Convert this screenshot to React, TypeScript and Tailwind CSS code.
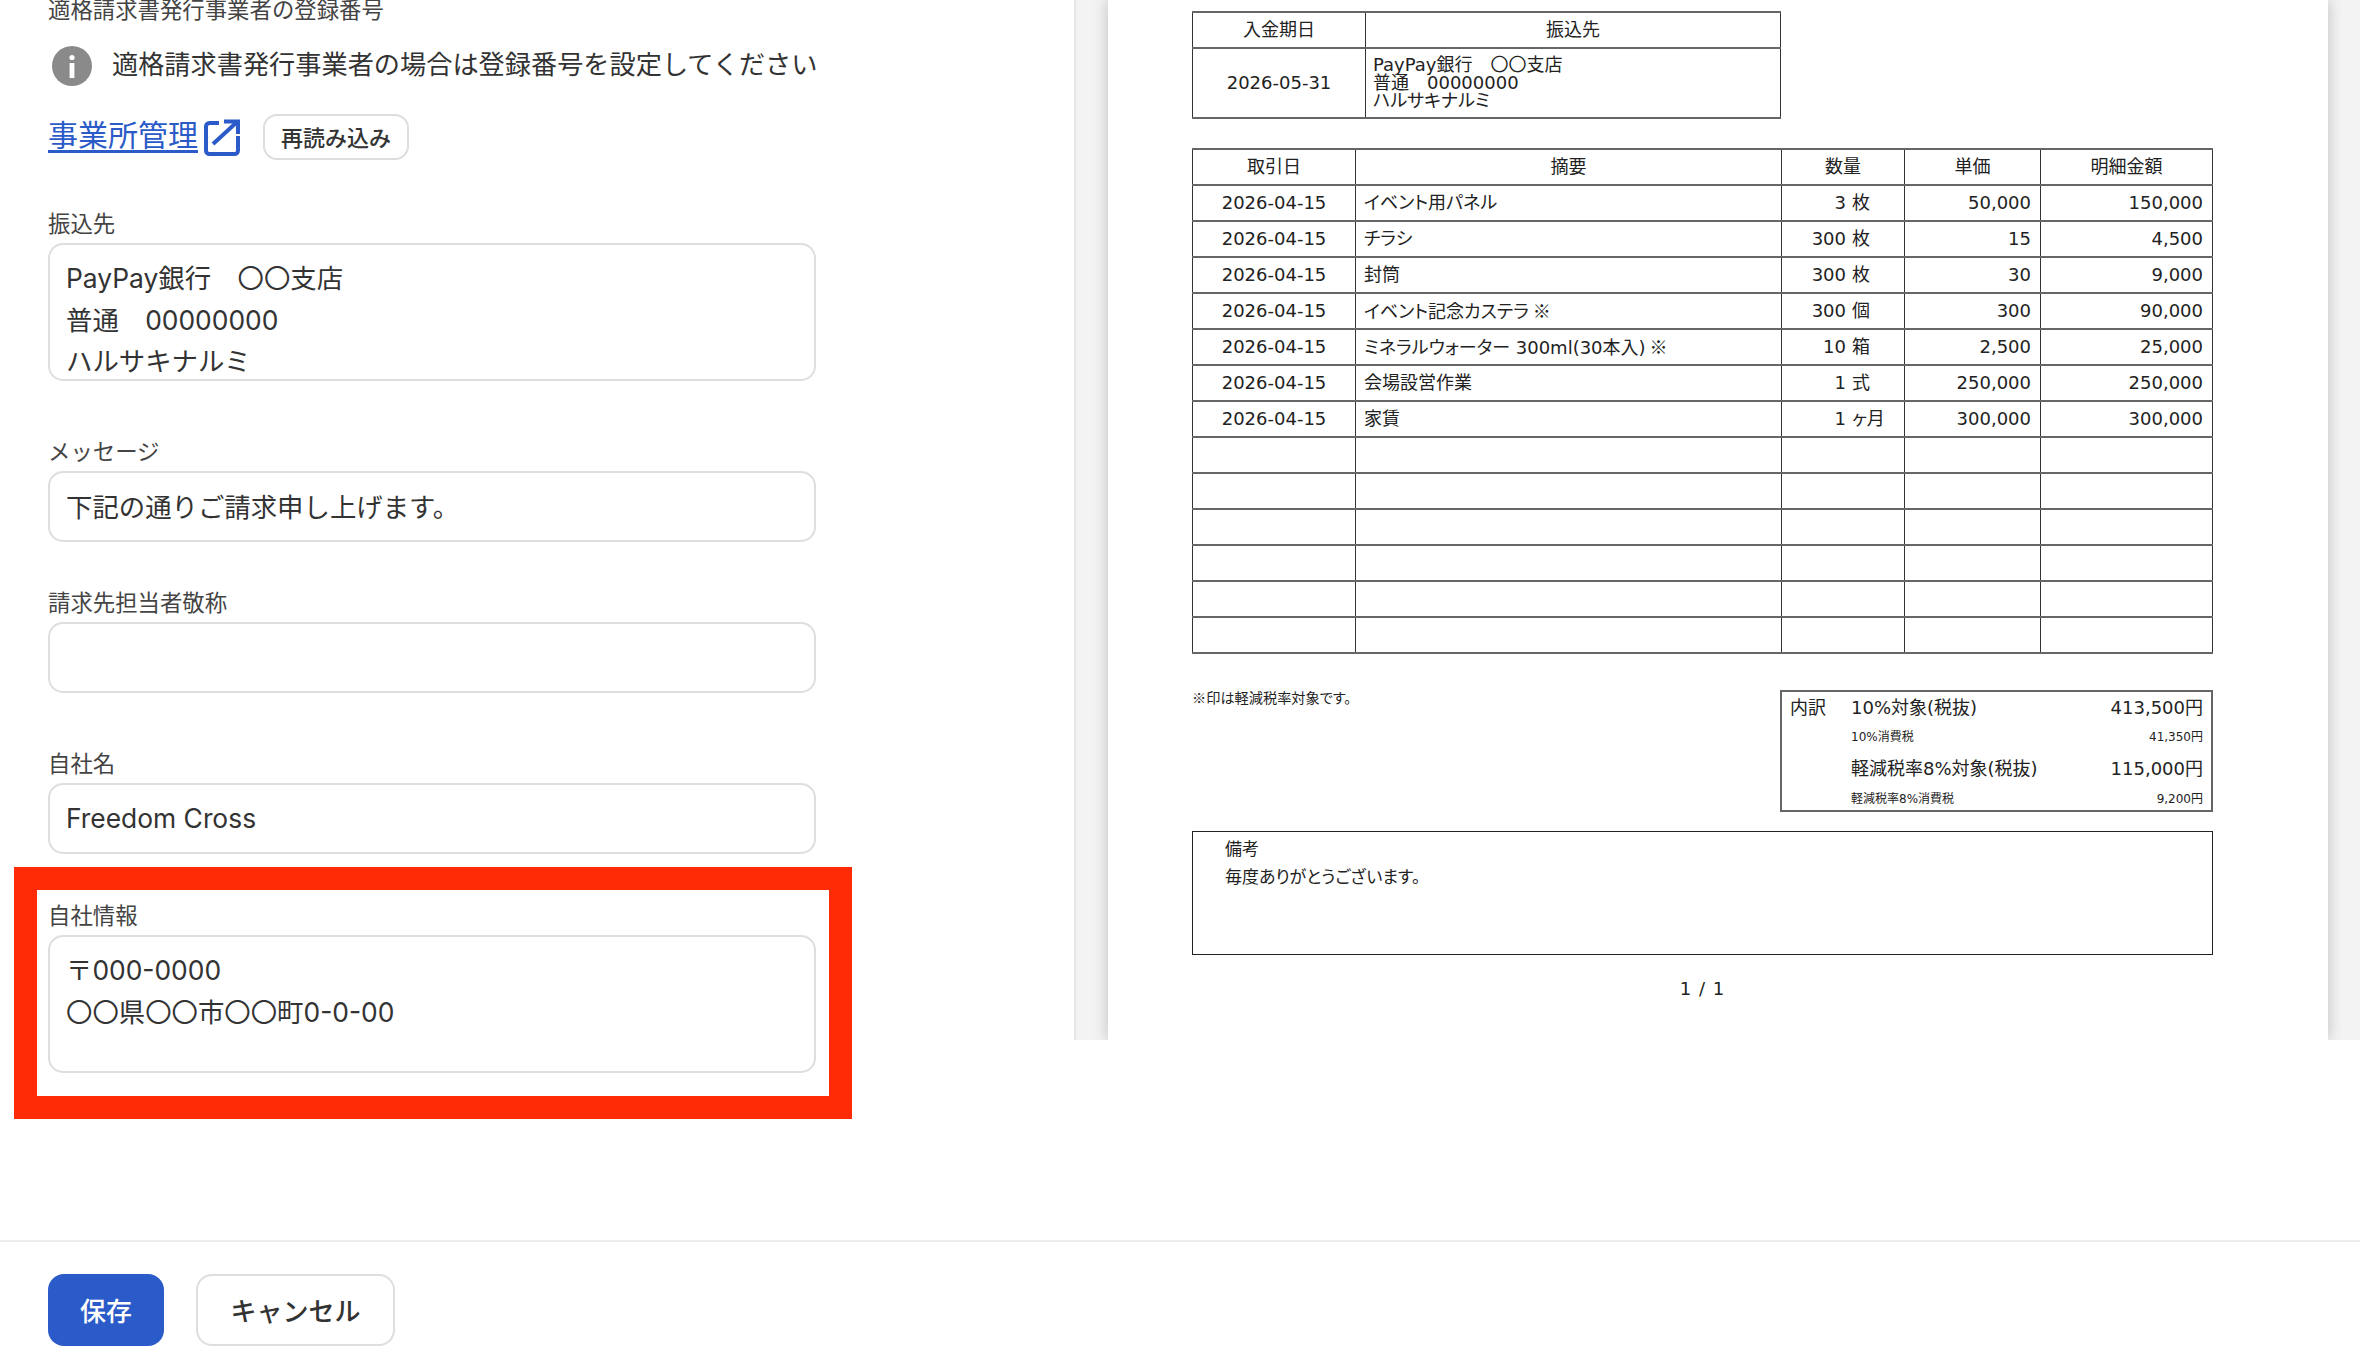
const rows = [
  { date: '2026-04-15', desc: 'イベント用パネル', qty: '3', unit: '枚', price: '50,000', amount: '150,000' },
  { date: '2026-04-15', desc: 'チラシ', qty: '300', unit: '枚', price: '15', amount: '4,500' },
  { date: '2026-04-15', desc: '封筒', qty: '300', unit: '枚', price: '30', amount: '9,000' },
  { date: '2026-04-15', desc: 'イベント記念カステラ', mark: true, qty: '300', unit: '個', price: '300', amount: '90,000' },
  { date: '2026-04-15', desc: 'ミネラルウォーター 300ml(30本入)', mark: true, qty: '10', unit: '箱', price: '2,500', amount: '25,000' },
  { date: '2026-04-15', desc: '会場設営作業', qty: '1', unit: '式', price: '250,000', amount: '250,000' },
  { date: '2026-04-15', desc: '家賃', qty: '1', unit: 'ヶ月', price: '300,000', amount: '300,000' },
  ...Array.from({ length: 6 }, () => ({ date: '', desc: '', qty: '', unit: '', price: '', amount: '' })),
];

const cell = 'border-x border-x-[#333] border-y-2 border-y-[#666] p-0 h-[36px] text-[18px] leading-none font-normal text-[#222]';
const inputBox = "block w-[768px] rounded-[15px] border-2 border-[#dedede] bg-white px-[16px] font-['Inter','Noto_Sans_CJK_JP',sans-serif] text-[26.4px] text-[#333] outline-none resize-none overflow-hidden";

function Field({ label, className, children }: { label: string; className: string; children: React.ReactNode }) {
  return (
    <div className={className}>
      <div className="mb-[5px] h-[30px] text-[22.4px] leading-[28px] text-[#444]">{label}</div>
      {children}
    </div>
  );
}

function InfoIcon() {
  return (
    <svg width="40" height="40" viewBox="0 0 40 40" className="shrink-0">
      <circle cx="20" cy="20" r="20" fill="#8a8a8a" />
      <circle cx="20" cy="11.5" r="2.6" fill="#fff" />
      <rect x="17.6" y="17" width="4.8" height="15" fill="#fff" />
    </svg>
  );
}

function ExternalIcon() {
  return (
    <svg width="36" height="37" viewBox="0 0 36 37" fill="none" stroke="#2b5bc8" strokeWidth="4" className="ml-[6px] shrink-0">
      <path d="M15 4H5.5A3.5 3.5 0 0 0 2 7.5v24A3.5 3.5 0 0 0 5.5 35h25a3.5 3.5 0 0 0 3.5-3.5V17" />
      <path d="M9 25 33 3" />
      <path d="M20 2.5h14V15" />
    </svg>
  );
}

export default function App() {
  return (
    <div className="flex h-[1355px] w-[2360px] flex-col overflow-hidden bg-white font-['Noto_Sans_CJK_JP','Noto_Sans',sans-serif]">
      <div className="flex h-[1240px] items-start">
        <div className="w-[1074px] shrink-0 pl-[48px]">
          <div className="mt-[-7px] h-[30px] text-[22.4px] leading-[30px] text-[#444]">適格請求書発行事業者の登録番号</div>

          <div className="mt-[23px] ml-[4px] flex h-[40px] items-center gap-[20px]">
            <InfoIcon />
            <span className="pb-[4px] text-[26.2px] text-[#333]">適格請求書発行事業者の場合は登録番号を設定してください</span>
          </div>

          <div className="mt-[28px] flex h-[46px] items-center">
            <a className="pb-[8px] text-[30px] leading-none text-[#2b5bc8] underline underline-offset-4">事業所管理</a>
            <ExternalIcon />
            <button className="ml-[23px] h-[46px] w-[146px] rounded-[14px] border-2 border-[#dedede] bg-white pb-[2px] text-[22px] font-medium text-[#333]">
              再読み込み
            </button>
          </div>

          <Field label="振込先" className="mt-[48px]">
            <textarea
              readOnly
              className={`${inputBox} h-[138px] py-[13px] leading-[41.6px]`}
              defaultValue={'PayPay銀行　〇〇支店\n普通　00000000\nハルサキナルミ'}
            />
          </Field>

          <Field label="メッセージ" className="mt-[55px]">
            <input readOnly className={`${inputBox} h-[71px] pb-[2px]`} defaultValue="下記の通りご請求申し上げます。" />
          </Field>

          <Field label="請求先担当者敬称" className="mt-[45px]">
            <input readOnly className={`${inputBox} h-[71px]`} />
          </Field>

          <Field label="自社名" className="mt-[55px]">
            <input readOnly className={`${inputBox} h-[71px] pb-[2px]`} defaultValue="Freedom Cross" />
          </Field>

          <Field label="自社情報" className="relative mt-[46px]">
            <textarea
              readOnly
              className={`${inputBox} h-[138px] py-[13px] leading-[41.6px]`}
              defaultValue={'〒000-0000\n〇〇県〇〇市〇〇町0-0-00'}
            />
            <div className="pointer-events-none absolute left-[-34px] top-[-33px] h-[252px] w-[838px] border-[23px] border-[#ff2a06]" />
          </Field>
        </div>

        <div className="h-[1040px] flex-1 overflow-hidden border-l-2 border-[#e6e6e6] bg-[#f4f3f4] pl-[32px]">
          <div className="h-[1040px] w-[1220px] bg-white pl-[84px] pt-[11px] shadow-[0_0_14px_rgba(0,0,0,0.22)] font-['DejaVu_Sans','Noto_Sans_CJK_JP',sans-serif] [font-feature-settings:'palt']">
            <table className="w-[589px] table-fixed border-collapse">
              <colgroup>
                <col className="w-[173px]" />
                <col />
              </colgroup>
              <tbody>
                <tr>
                  <th className={cell}>入金期日</th>
                  <th className={cell}>振込先</th>
                </tr>
                <tr>
                  <td className={`${cell} !h-[70px] text-center`}>2026-05-31</td>
                  <td className={`${cell} !h-[70px] pl-[7px] !leading-[18px]`}>
                    PayPay銀行　〇〇支店
                    <br />
                    普通　00000000
                    <br />
                    ハルサキナルミ
                  </td>
                </tr>
              </tbody>
            </table>

            <table className="mt-[29px] w-[1021px] table-fixed border-collapse">
              <colgroup>
                <col className="w-[163px]" />
                <col className="w-[426px]" />
                <col className="w-[123px]" />
                <col className="w-[136px]" />
                <col />
              </colgroup>
              <thead>
                <tr>
                  <th className={cell}>取引日</th>
                  <th className={cell}>摘要</th>
                  <th className={cell}>数量</th>
                  <th className={cell}>単価</th>
                  <th className={cell}>明細金額</th>
                </tr>
              </thead>
              <tbody>
                {rows.map((r, i) => (
                  <tr key={i}>
                    <td className={`${cell} text-center`}>{r.date}</td>
                    <td className={`${cell} pl-[8px]`}>
                      {r.desc}
                      {r.mark && <span className="font-['Noto_Sans_CJK_JP',sans-serif]"> ※</span>}
                    </td>
                    <td className={cell}>
                      {r.qty && (
                        <div className="flex gap-[6px]">
                          <span className="w-[64px] text-right">{r.qty}</span>
                          <span>{r.unit}</span>
                        </div>
                      )}
                    </td>
                    <td className={`${cell} pr-[9px] text-right`}>{r.price}</td>
                    <td className={`${cell} pr-[9px] text-right`}>{r.amount}</td>
                  </tr>
                ))}
              </tbody>
            </table>

            <div className="mt-[36px] flex w-[1021px] justify-between">
              <div className="mt-[-2px] font-['Noto_Sans_CJK_JP',sans-serif] text-[14.2px] leading-[18px] text-[#222]">※印は軽減税率対象です。</div>
              <div className="h-[122px] w-[433px] border-2 border-[#666] px-[8px] text-[#222]">
                <div className="flex h-[30px] items-center text-[18px]">
                  <span className="w-[61px]">内訳</span>
                  <span className="flex-1">10%対象(税抜)</span>
                  <span>413,500円</span>
                </div>
                <div className="flex h-[30px] items-center pl-[61px] text-[12px]">
                  <span className="flex-1">10%消費税</span>
                  <span>41,350円</span>
                </div>
                <div className="mt-[1px] flex h-[30px] items-center pl-[61px] text-[18px]">
                  <span className="flex-1">軽減税率8%対象(税抜)</span>
                  <span>115,000円</span>
                </div>
                <div className="flex h-[27px] items-center pl-[61px] pt-[4px] text-[12px]">
                  <span className="flex-1">軽減税率8%消費税</span>
                  <span>9,200円</span>
                </div>
              </div>
            </div>

            <div className="mt-[19px] h-[124px] w-[1021px] border border-[#222] pl-[32px] pt-[3px] text-[17px] leading-[28px] text-[#222]">
              <div>備考</div>
              <div>毎度ありがとうございます。</div>
            </div>

            <div className="mt-[22px] w-[1021px] text-center text-[18px] leading-[24px] tracking-[1px] text-[#222]">1 / 1</div>
          </div>
        </div>
      </div>

      <div className="flex h-[115px] gap-[32px] border-t-2 border-[#ececec] pl-[48px] pt-[32px]">
        <button className="h-[72px] w-[116px] rounded-[16px] bg-[#2b5bc8] pb-[2px] text-[26px] font-medium text-white">保存</button>
        <button className="h-[72px] w-[199px] rounded-[16px] border-2 border-[#dedede] bg-white pb-[2px] text-[26px] font-medium text-[#333]">キャンセル</button>
      </div>
    </div>
  );
}
